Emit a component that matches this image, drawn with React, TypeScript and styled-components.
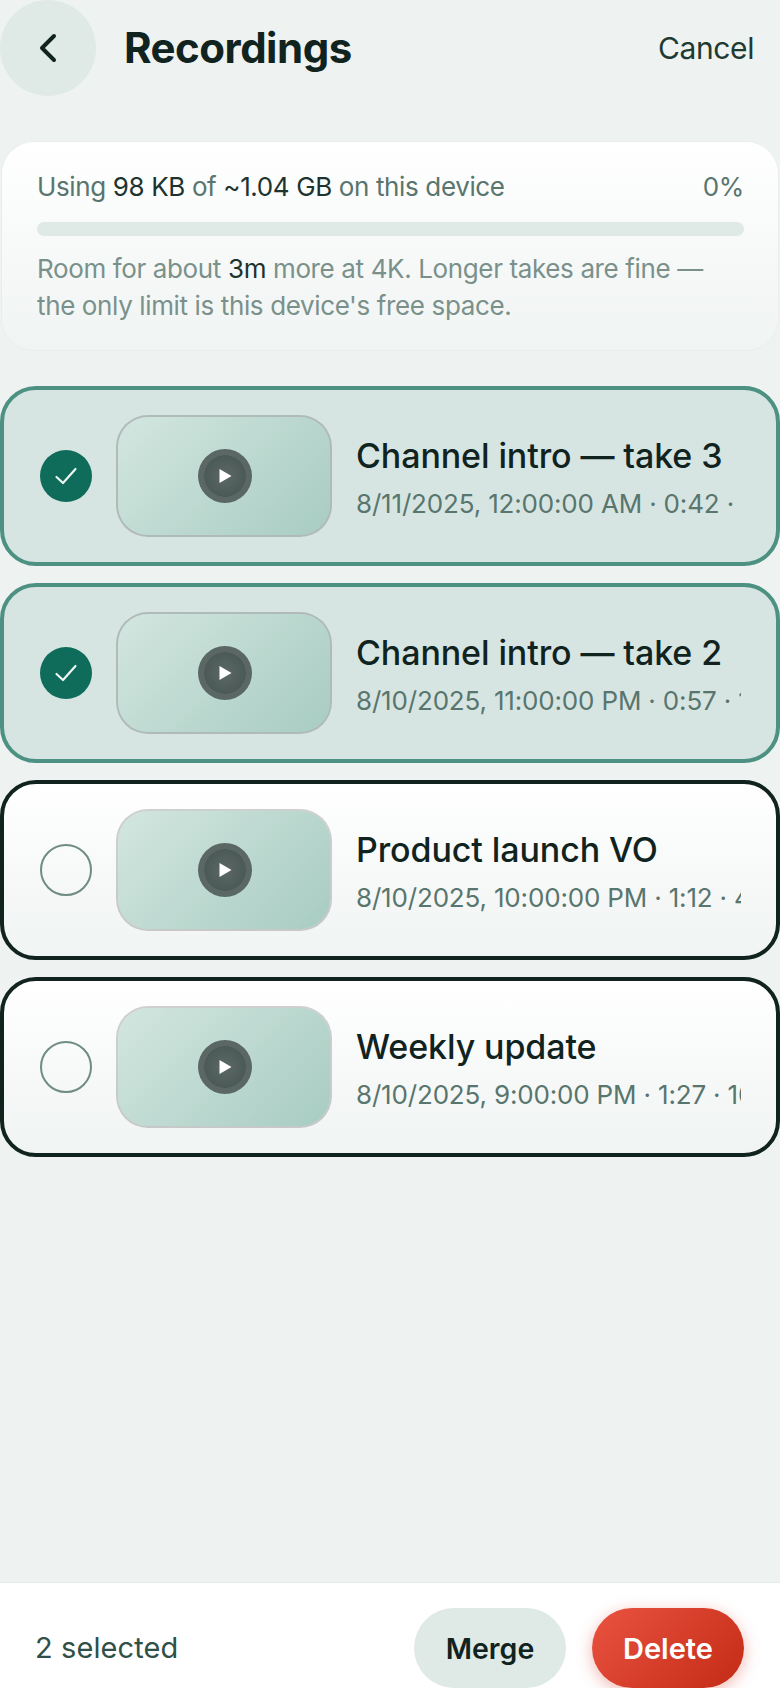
import React from "react";
import styled, { createGlobalStyle } from "styled-components";

const GlobalStyle = createGlobalStyle`
  html, body {
    margin: 0;
    padding: 0;
    background: #eef2f1;
  }
  * {
    box-sizing: border-box;
  }
`;

const Page = styled.div`
  width: 780px;
  height: 1688px;
  overflow: hidden;
  display: flex;
  flex-direction: column;
  font-family: Inter, "Noto Sans", sans-serif;
  color: #10231e;
  background: #eef2f1;
`;

const Header = styled.header`
  height: 96px;
  display: flex;
  align-items: center;
  padding-right: 26px;
`;

const BackButton = styled.button`
  width: 96px;
  height: 96px;
  flex: none;
  border: 0;
  padding: 0;
  border-radius: 50%;
  background: #dfe9e5;
  color: #10231e;
  display: flex;
  align-items: center;
  justify-content: center;
`;

const Title = styled.h1`
  flex: 1;
  margin: 0 0 0 28px;
  font-size: 42px;
  line-height: 48px;
  font-weight: 700;
  letter-spacing: -0.5px;
`;

const CancelLink = styled.button`
  border: 0;
  padding: 0;
  background: none;
  font-family: inherit;
  font-size: 30px;
  letter-spacing: -0.4px;
  color: #1f3a33;
`;

const StorageCard = styled.section`
  margin: 46px 2px 0;
  height: 208px;
  padding: 28px 34px 0 35px;
  border-radius: 32px;
  background: linear-gradient(180deg, #ffffff, #f0f4f3);
  box-shadow: 0 0 0 1px rgba(16, 35, 30, 0.02);
`;

const UsageRow = styled.div`
  display: flex;
  justify-content: space-between;
  font-size: 26px;
  line-height: 34px;
  letter-spacing: -0.37px;
  color: #58756e;
`;

const Strong = styled.span`
  color: #1c332e;
`;

const Track = styled.div`
  height: 14px;
  margin-top: 18px;
  border-radius: 7px;
  background: #dfe9e5;
`;

const Note = styled.p`
  margin: 14px 0 0;
  font-size: 26px;
  line-height: 37px;
  letter-spacing: -0.37px;
  color: #7a918b;
`;

const List = styled.ul`
  list-style: none;
  margin: 36px 0 0;
  padding: 0;
  display: flex;
  flex-direction: column;
  gap: 17px;
`;

const Row = styled.li<{ $selected: boolean }>`
  height: 180px;
  display: flex;
  align-items: center;
  padding: 0 35px 0 36px;
  border-radius: 36px;
  border: 4px solid ${(p) => (p.$selected ? "#4d9183" : "#10231e")};
  background: ${(p) =>
    p.$selected ? "#d7e5e2" : "linear-gradient(180deg, #ffffff, #f0f4f3)"};
`;

const Check = styled.span<{ $selected: boolean }>`
  width: 52px;
  height: 52px;
  flex: none;
  border-radius: 50%;
  display: flex;
  align-items: center;
  justify-content: center;
  border: ${(p) => (p.$selected ? "0" : "2px solid #6f8c85")};
  background: ${(p) => (p.$selected ? "#0f6b5a" : "transparent")};
`;

const Thumb = styled.div`
  width: 216px;
  height: 122px;
  flex: none;
  margin-left: 24px;
  padding-left: 1px;
  border-radius: 32px;
  border: 2px solid rgba(0, 0, 0, 0.18);
  background: linear-gradient(135deg, #d2e6df, #a8ccc2) padding-box;
  display: flex;
  align-items: center;
  justify-content: center;
`;

const PlayBadge = styled.div`
  width: 54px;
  height: 54px;
  border-radius: 50%;
  background: radial-gradient(
    circle closest-side,
    #5b6865 0,
    #4c5a57 76%,
    #5a6764 78%,
    #5a6764 100%
  );
  display: flex;
  align-items: center;
  justify-content: center;
`;

const Info = styled.div`
  flex: 1;
  min-width: 0;
  margin-left: 24px;
  padding-top: 4px;
`;

const Name = styled.div`
  font-size: 34px;
  line-height: 44px;
  font-weight: 500;
  letter-spacing: -0.1px;
  white-space: nowrap;
  overflow: hidden;
`;

const Meta = styled.div`
  margin-top: 8px;
  font-size: 26px;
  line-height: 36px;
  letter-spacing: -0.17px;
  color: #58756e;
  white-space: nowrap;
  overflow: hidden;
`;

const Footer = styled.footer`
  margin-top: auto;
  height: 106px;
  flex: none;
  background: #ffffff;
  border-top: 1px solid #e3eae8;
  padding: 25px 36px 0 35px;
  display: flex;
  align-items: flex-start;
  gap: 26px;
`;

const SelectedCount = styled.span`
  flex: 1;
  font-size: 29px;
  line-height: 80px;
  letter-spacing: 0.1px;
  color: #2f4f47;
`;

const Action = styled.button<{ $danger?: boolean }>`
  width: 152px;
  height: 80px;
  border: 0;
  padding: 0;
  border-radius: 40px;
  font-family: inherit;
  font-size: ${(p) => (p.$danger ? "29px" : "28.500px")};
  font-weight: 600;
  color: ${(p) => (p.$danger ? "#ffffff" : "#10231e")};
  background: ${(p) =>
    p.$danger ? "linear-gradient(135deg, #ea5340, #c32b16)" : "#dfe9e5"};
  box-shadow: ${(p) => (p.$danger ? "0 4px 16px rgba(210, 55, 35, 0.35)" : "none")};
`;

const recordings = [
  { name: "Channel intro — take 3", meta: "8/11/2025, 12:00:00 AM · 0:42 · 4 KB", selected: true },
  { name: "Channel intro — take 2", meta: "8/10/2025, 11:00:00 PM · 0:57 · 1 KB", selected: true },
  { name: "Product launch VO", meta: "8/10/2025, 10:00:00 PM · 1:12 · 4 KB", selected: false },
  { name: "Weekly update", meta: "8/10/2025, 9:00:00 PM · 1:27 · 10 KB", selected: false },
];

export default function App() {
  return (
    <Page>
      <GlobalStyle />
      <Header>
        <BackButton aria-label="Back">
          <svg width="36" height="36" viewBox="0 0 36 36" fill="none">
            <path d="M24 6 L12 18 L24 30" stroke="currentColor" strokeWidth="4" strokeLinecap="round" strokeLinejoin="round" />
          </svg>
        </BackButton>
        <Title>Recordings</Title>
        <CancelLink>Cancel</CancelLink>
      </Header>

      <StorageCard>
        <UsageRow>
          <span>
            Using <Strong>98 KB</Strong> of <Strong>~1.04 GB</Strong> on this device
          </span>
          <span>0%</span>
        </UsageRow>
        <Track />
        <Note>
          Room for about <Strong>3m</Strong> more at 4K. Longer takes are fine — the only limit is this device's free space.
        </Note>
      </StorageCard>

      <List>
        {recordings.map((r) => (
          <Row key={r.name} $selected={r.selected}>
            <Check $selected={r.selected}>
              {r.selected && (
                <svg width="24" height="24" viewBox="0 0 24 24" fill="none">
                  <path d="M2.500 13 L9 19 L21.500 5" stroke="#eef6f3" strokeWidth="2.200" strokeLinecap="round" strokeLinejoin="round" />
                </svg>
              )}
            </Check>
            <Thumb>
              <PlayBadge>
                <svg width="16" height="16" viewBox="0 0 16 16">
                  <path d="M2.500 1 L14.500 8 L2.500 15 Z" fill="#ffffff" />
                </svg>
              </PlayBadge>
            </Thumb>
            <Info>
              <Name>{r.name}</Name>
              <Meta>{r.meta}</Meta>
            </Info>
          </Row>
        ))}
      </List>

      <Footer>
        <SelectedCount>2 selected</SelectedCount>
        <Action>Merge</Action>
        <Action $danger>Delete</Action>
      </Footer>
    </Page>
  );
}
